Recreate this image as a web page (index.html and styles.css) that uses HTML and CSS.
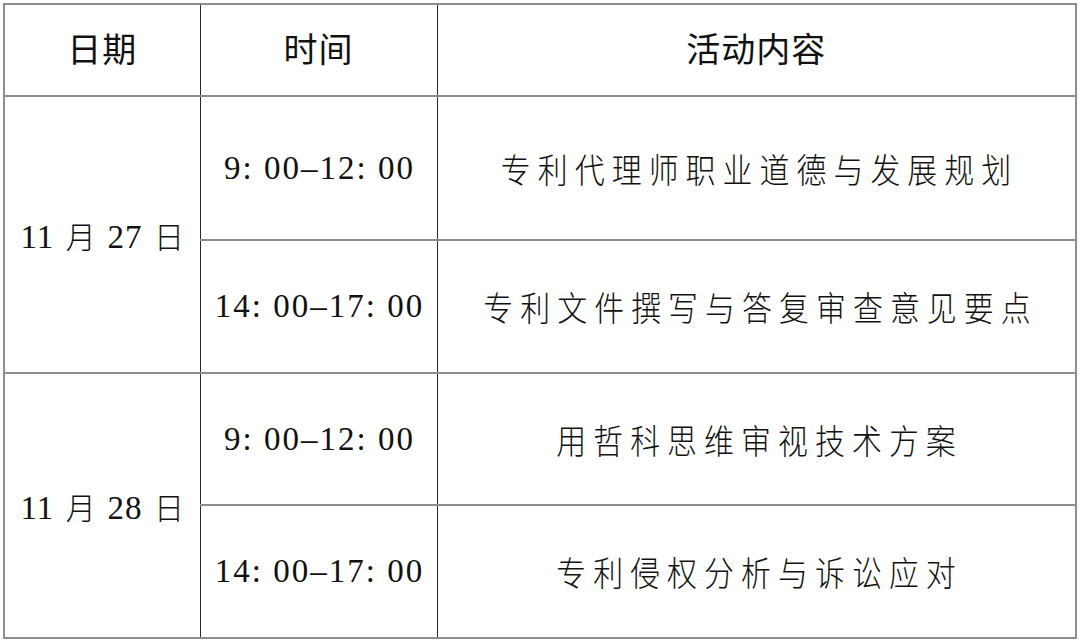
FILE: index.html
```html
<!DOCTYPE html>
<html lang="zh-CN">
<head>
<meta charset="utf-8">
<link rel="stylesheet" href="styles.css">
</head>
<body>
<table class="schedule">
  <colgroup>
    <col class="c-date">
    <col class="c-time">
    <col class="c-topic">
  </colgroup>
  <thead>
    <tr class="r-head">
      <th><span class="head-text">日期</span></th>
      <th><span class="head-text">时间</span></th>
      <th><span class="head-text">活动内容</span></th>
    </tr>
  </thead>
  <tbody>
    <tr class="r1">
      <td class="date" rowspan="2"><span class="num">11</span> 月 <span class="num">27</span> 日</td>
      <td class="time">9: 00–12: 00</td>
      <td class="topic"><span class="topic-text">专利代理师职业道德与发展规划</span></td>
    </tr>
    <tr class="r2">
      <td class="time">14: 00–17: 00</td>
      <td class="topic"><span class="topic-text">专利文件撰写与答复审查意见要点</span></td>
    </tr>
    <tr class="r3">
      <td class="date" rowspan="2"><span class="num">11</span> 月 <span class="num">28</span> 日</td>
      <td class="time">9: 00–12: 00</td>
      <td class="topic"><span class="topic-text">用哲科思维审视技术方案</span></td>
    </tr>
    <tr class="r4">
      <td class="time">14: 00–17: 00</td>
      <td class="topic"><span class="topic-text">专利侵权分析与诉讼应对</span></td>
    </tr>
  </tbody>
</table>
</body>
</html>
```
FILE: styles.css
```css
html, body {
  margin: 0;
  padding: 0;
  background: #ffffff;
}

.schedule {
  margin: 3px 0 0 3px;
  width: 1074px;
  border-collapse: collapse;
  table-layout: fixed;
  color: #111;
  border: 2px solid #8e8e8e;
}

.c-date { width: 196px; }
.c-time { width: 237px; }

.schedule th,
.schedule td {
  padding: 0;
  text-align: center;
  vertical-align: middle;
  border-top: 2px solid #8e8e8e;
  border-bottom: 2px solid #8e8e8e;
  border-left: 1px solid #2a2a2a;
  border-right: 1px solid #2a2a2a;
}

.schedule th:first-child,
.schedule td.date {
  border-left: 2px solid #8e8e8e;
}

.schedule th:last-child,
.schedule td.topic {
  border-right: 2px solid #8e8e8e;
}

.schedule th {
  font-family: "Noto Sans CJK SC", sans-serif;
  font-weight: 400;
  font-size: 34px;
  letter-spacing: 1px;
}

.head-text {
  display: inline-block;
  position: relative;
  top: -3px;
}

.r-head { height: 92px; }
.r1 { height: 144px; }
.r2 { height: 133px; }
.r3 { height: 132px; }
.r4 { height: 133px; }

.time {
  font-family: "Liberation Serif", serif;
  font-size: 33px;
  font-weight: 400;
  letter-spacing: 2px;
  text-indent: 2px;
}

.date {
  font-family: "Noto Sans CJK SC", sans-serif;
  font-weight: 300;
  font-size: 30px;
  word-spacing: 5px;
}

.date .num {
  font-family: "Liberation Serif", serif;
  font-size: 33px;
  font-weight: 400;
  letter-spacing: 1px;
}

.topic-text {
  display: inline-block;
  font-family: "Noto Sans CJK SC", sans-serif;
  font-weight: 300;
  font-size: 34px;
  letter-spacing: 8px;
  padding-left: 8px;
  transform: scaleX(0.88);
  white-space: nowrap;
}
```
